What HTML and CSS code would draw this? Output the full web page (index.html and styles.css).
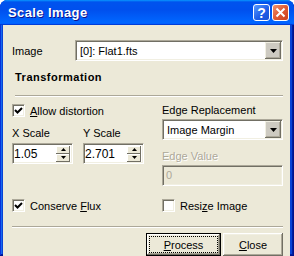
FILE: index.html
```html
<!DOCTYPE html>
<html>
<head>
  <title>Scale Image</title>
  <link rel="stylesheet" href="styles.css">
</head>
<body>

  <div class="window">

    <div class="titlebar">
      <span class="title">Scale Image</span>
      <span class="tbtn help">?</span>
      <span class="tbtn close">
        <svg width="11" height="11" viewBox="0 0 11 11"><path d="M1.5 1.5 L9.5 9.5 M9.5 1.5 L1.5 9.5" stroke="#fff" stroke-width="2"/></svg>
      </span>
    </div>

    <div class="main">

      <div class="image-row">
        <span class="label">Image</span>
        <div class="combo">
          <span class="value">[0]: Flat1.fts</span>
          <span class="drop"><svg width="7" height="4" viewBox="0 0 7 4"><path d="M0 0 H7 L3.5 4 Z" fill="#000"/></svg></span>
        </div>
      </div>

      <div class="heading">Transformation</div>
      <div class="etch indent"></div>

      <div class="cols">
        <div class="col">
          <div class="check">
            <span class="box"><svg width="9" height="9" viewBox="0 0 9 9"><path d="M1 4 L3.5 6.5 L8 2" stroke="#000" stroke-width="2" fill="none"/></svg></span>
            <span><u>A</u>llow distortion</span>
          </div>
          <div class="scales">
            <div class="field">
              <div class="caption">X Scale</div>
              <div class="spin">
                <span class="value">1.05</span>
                <span class="arrows">
                  <span class="arrow"><svg width="5" height="3" viewBox="0 0 5 3"><path d="M2.5 0 L5 3 H0 Z" fill="#000"/></svg></span>
                  <span class="arrow"><svg width="5" height="3" viewBox="0 0 5 3"><path d="M0 0 H5 L2.5 3 Z" fill="#000"/></svg></span>
                </span>
              </div>
            </div>
            <div class="field">
              <div class="caption">Y Scale</div>
              <div class="spin">
                <span class="value">2.701</span>
                <span class="arrows">
                  <span class="arrow"><svg width="5" height="3" viewBox="0 0 5 3"><path d="M2.5 0 L5 3 H0 Z" fill="#000"/></svg></span>
                  <span class="arrow"><svg width="5" height="3" viewBox="0 0 5 3"><path d="M0 0 H5 L2.5 3 Z" fill="#000"/></svg></span>
                </span>
              </div>
            </div>
          </div>
        </div>

        <div class="col">
          <div class="caption first">Edge Replacement</div>
          <div class="combo">
            <span class="value">Image Margin</span>
            <span class="drop"><svg width="7" height="4" viewBox="0 0 7 4"><path d="M0 0 H7 L3.5 4 Z" fill="#000"/></svg></span>
          </div>
          <div class="caption disabled">Edge Value</div>
          <div class="input disabled">0</div>
        </div>
      </div>

      <div class="cols checks">
        <div class="check">
          <span class="box"><svg width="9" height="9" viewBox="0 0 9 9"><path d="M1 4 L3.5 6.5 L8 2" stroke="#000" stroke-width="2" fill="none"/></svg></span>
          <span>Conserve <u>F</u>lux</span>
        </div>
        <div class="check">
          <span class="box"></span>
          <span>Resi<u>z</u>e Image</span>
        </div>
      </div>

      <div class="etch"></div>

      <div class="actions">
        <button class="btn default"><span class="focus"><u>P</u>rocess</span></button>
        <button class="btn close-btn"><span class="focus"><u>C</u>lose</span></button>
      </div>

    </div>
  </div>

</body>
</html>
```

FILE: styles.css
```css
html, body{
    margin: 0;
}

body{
    font-family: "Liberation Sans", Arial, sans-serif;
    font-size: 11px;
    color: #000;
    background: #fff;
}

.window{
    width: 294px;
    height: 256px;
    display: flex;
    flex-direction: column;
    background: #0842d6;
    border-radius: 8px 8px 0 0;
    box-shadow: inset -1px -1px #00138c, inset 1px 0 #0831d9, inset -2px -2px #001ea0, inset 2px 0 #166aee;
}

.titlebar{
    height: 25px;
    flex: none;
    display: flex;
    align-items: center;
    padding: 0 5px 0 8px;
    border-radius: 7px 7px 0 0;
    background: linear-gradient(180deg, #0997ff, #0053ee 8%, #0050ee 40%, #06f 88%, #06f 93%, #005bff 95%, #003dd7 96%, #003dd7);
    color: #fff;
}

.title{
    flex: 1;
    font-weight: bold;
    font-size: 13px;
    letter-spacing: 0.4px;
    text-shadow: 1px 1px #0f1089;
}

.tbtn{
    width: 17px;
    height: 17px;
    box-sizing: border-box;
    border: 1px solid #fff;
    border-radius: 3px;
    display: flex;
    align-items: center;
    justify-content: center;
}

.help{
    background: linear-gradient(135deg, #5a9cff, #1f5fe8 55%, #1a4fd4);
    font-weight: bold;
    font-size: 14px;
    line-height: 1;
}

.close{
    margin-left: 2px;
    background: linear-gradient(135deg, #f0936f, #e05a33 50%, #c9401f);
}

.main{
    flex: 1;
    margin: 0 4px 3px 3px;
    padding: 15px 7px 9px 9px;
    background: #ece9d8;
}

.image-row{
    display: flex;
    align-items: center;
}

.label{
    width: 63px;
}

.combo, .spin, .input, .box{
    box-sizing: border-box;
    border: 1px solid;
    border-color: #aca899 #fff #fff #aca899;
    box-shadow: inset 1px 1px #716f64, inset -1px -1px #f1efe2;
    background: #fff;
}

.combo{
    flex: 1;
    height: 21px;
    display: flex;
    align-items: center;
}

.combo .value{
    flex: 1;
    padding-left: 4px;
}

.drop{
    width: 16px;
    height: 17px;
    margin: 1px 1px 1px 0;
    box-sizing: border-box;
    display: flex;
    align-items: center;
    justify-content: center;
    background: #cdcac1;
    box-shadow: inset -1px -1px #716f64, inset 1px 1px #f1efe2, inset -2px -2px #aca899;
}

.heading{
    margin: 11px 0 0 3px;
    font-weight: bold;
    letter-spacing: 0.5px;
    line-height: 11px;
}

.etch{
    height: 0;
    border-top: 1px solid #aca899;
    border-bottom: 1px solid #fff;
}

.etch.indent{
    margin-left: 3px;
}

.cols{
    display: grid;
    grid-template-columns: 150px 1fr;
    margin-top: 5px;
}

.col{
    display: flex;
    flex-direction: column;
}

.check{
    height: 17px;
    display: flex;
    align-items: center;
    gap: 5px;
}

.box{
    width: 13px;
    height: 13px;
    display: flex;
    align-items: center;
    justify-content: center;
}

.scales{
    display: flex;
    gap: 10px;
    margin-top: 7px;
}

.field{
    width: 61px;
}

.caption{
    line-height: 14px;
}

.spin{
    margin-top: 3px;
    height: 21px;
    display: flex;
    align-items: center;
}

.spin .value{
    flex: 1;
    padding-left: 1px;
    font-size: 12px;
}

.arrows{
    display: flex;
    flex-direction: column;
    margin: 1px 2px 1px 0;
}

.arrow{
    width: 14px;
    height: 8px;
    display: flex;
    align-items: center;
    justify-content: center;
    background: #ece9d8;
    box-shadow: inset -1px -1px #716f64, inset 1px 1px #fff;
}

.caption.first{
    margin-top: 1px;
}

.col .combo{
    flex: none;
    margin-top: 2px;
}

.caption.disabled{
    margin-top: 9px;
    color: #aca899;
    text-shadow: 1px 1px #fff;
}

.input{
    margin-top: 2px;
    height: 21px;
    padding-left: 3px;
    line-height: 19px;
}

.input.disabled{
    background: #ece9d8;
    color: #aca899;
}

.checks{
    margin-top: 11px;
}

.main > .etch{
    margin-top: 12px;
}

.actions{
    display: flex;
    justify-content: flex-end;
    gap: 2px;
    margin-top: 5px;
}

.btn{
    height: 23px;
    box-sizing: border-box;
    padding: 3px;
    border: none;
    font: inherit;
    color: #000;
    background: #ece9d8;
    box-shadow: inset -1px -1px #716f64, inset 1px 1px #fff, inset -2px -2px #aca899, inset 2px 2px #f1efe2;
    display: flex;
}

.btn .focus{
    flex: 1;
    display: flex;
    align-items: center;
    justify-content: center;
    border: 1px solid transparent;
}

.btn.default{
    width: 75px;
    border: 1px solid #000;
    padding: 2px;
}

.btn.default .focus{
    border: 1px dotted #000;
}

.close-btn{
    width: 60px;
}
```
